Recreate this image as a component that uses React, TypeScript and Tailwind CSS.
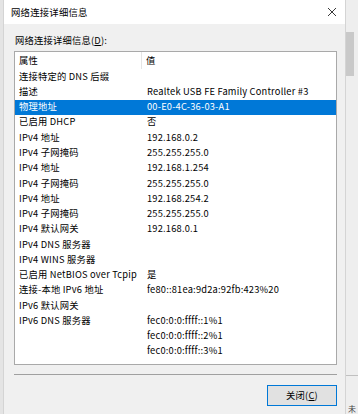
import React from "react";

const rows: [string, string][] = [
  ["连接特定的 DNS 后缀", ""],
  ["描述", "Realtek USB FE Family Controller #3"],
  ["物理地址", "00-E0-4C-36-03-A1"],
  ["已启用 DHCP", "否"],
  ["IPv4 地址", "192.168.0.2"],
  ["IPv4 子网掩码", "255.255.255.0"],
  ["IPv4 地址", "192.168.1.254"],
  ["IPv4 子网掩码", "255.255.255.0"],
  ["IPv4 地址", "192.168.254.2"],
  ["IPv4 子网掩码", "255.255.255.0"],
  ["IPv4 默认网关", "192.168.0.1"],
  ["IPv4 DNS 服务器", ""],
  ["IPv4 WINS 服务器", ""],
  ["已启用 NetBIOS over Tcpip", "是"],
  ["连接-本地 IPv6 地址", "fe80::81ea:9d2a:92fb:423%20"],
  ["IPv6 默认网关", ""],
  ["IPv6 DNS 服务器", "fec0:0:0:ffff::1%1"],
  ["", "fec0:0:0:ffff::2%1"],
  ["", "fec0:0:0:ffff::3%1"],
];

const SELECTED = 2;

export default function App() {
  return (
    <div
      className="flex w-[358px] h-[414px] overflow-hidden bg-[#ececec] text-[9.3px] tracking-[0.2px] text-black"
      style={{ fontFamily: "'Noto Sans CJK SC', 'Noto Sans', sans-serif" }}
    >
      {/* left strip */}
      <div className="w-[3px] shrink-0 bg-[#e4e4e4]" />

      {/* dialog */}
      <div className="w-[343px] shrink-0 flex flex-col border-x border-[#d4d4d4] bg-[#f0f0f0]">
        {/* title bar */}
        <div className="h-[24px] shrink-0 flex items-center justify-between bg-white pl-[7px] pr-[8px]">
          <span className="text-[9.4px]">网络连接详细信息</span>
          <svg width="10" height="10" viewBox="0 0 10 10" className="text-[#222]">
            <path d="M1 1L9 9M9 1L1 9" stroke="currentColor" strokeWidth="0.9" fill="none" />
          </svg>
        </div>

        {/* body */}
        <div className="flex flex-col pl-[10px] pr-[8px]">
          <div className="h-[27px] flex items-end pb-[3px] pl-[1px]">
            网络连接详细信息(<span className="underline">D</span>):
          </div>

          {/* list view */}
          <div className="h-[314px] border border-[#a9a9a9] bg-white overflow-hidden flex flex-col">
            <div className="h-[17px] shrink-0 flex items-center">
              <div className="w-[127px] shrink-0 pl-[4px] h-full flex items-center border-r border-[#e5e5e5]">
                属性
              </div>
              <div className="pl-[4px]">值</div>
            </div>
            {rows.map(([name, value], i) => (
              <div
                key={i}
                className={
                  i === SELECTED
                    ? "h-[15.28px] shrink-0 flex items-center bg-[#0078d7] text-white"
                    : "h-[15.28px] shrink-0 flex items-center"
                }
              >
                <div className="w-[127px] shrink-0 pl-[4px] whitespace-nowrap overflow-visible">
                  {name}
                </div>
                <div className="pl-[5px] whitespace-nowrap">{value}</div>
              </div>
            ))}
          </div>

          {/* separator */}
          <div className="mt-[9px] h-px bg-[#a0a0a0]" />

          {/* button row */}
          <div className="flex justify-end pt-[10px]">
            <button className="w-[70px] h-[21px] border border-[#0078d7] bg-[#e1e1e1] flex items-center justify-center">
              关闭(<span className="underline">C</span>)
            </button>
          </div>
        </div>
      </div>

      {/* right strip: background app */}
      <div className="flex-1 flex flex-col bg-[#eeeeee]">
        <div className="h-[32px]" />
        <div className="h-[44px] w-[8px] bg-[#c9c9c9]" />
        <div className="h-[299px]" />
        <div className="h-px bg-[#c0c0c0]" />
        <div className="flex-1 flex items-end pl-[2px] pb-[1px] text-[#444] text-[8px]">
          <span className="leading-none">未</span>
        </div>
      </div>
    </div>
  );
}
